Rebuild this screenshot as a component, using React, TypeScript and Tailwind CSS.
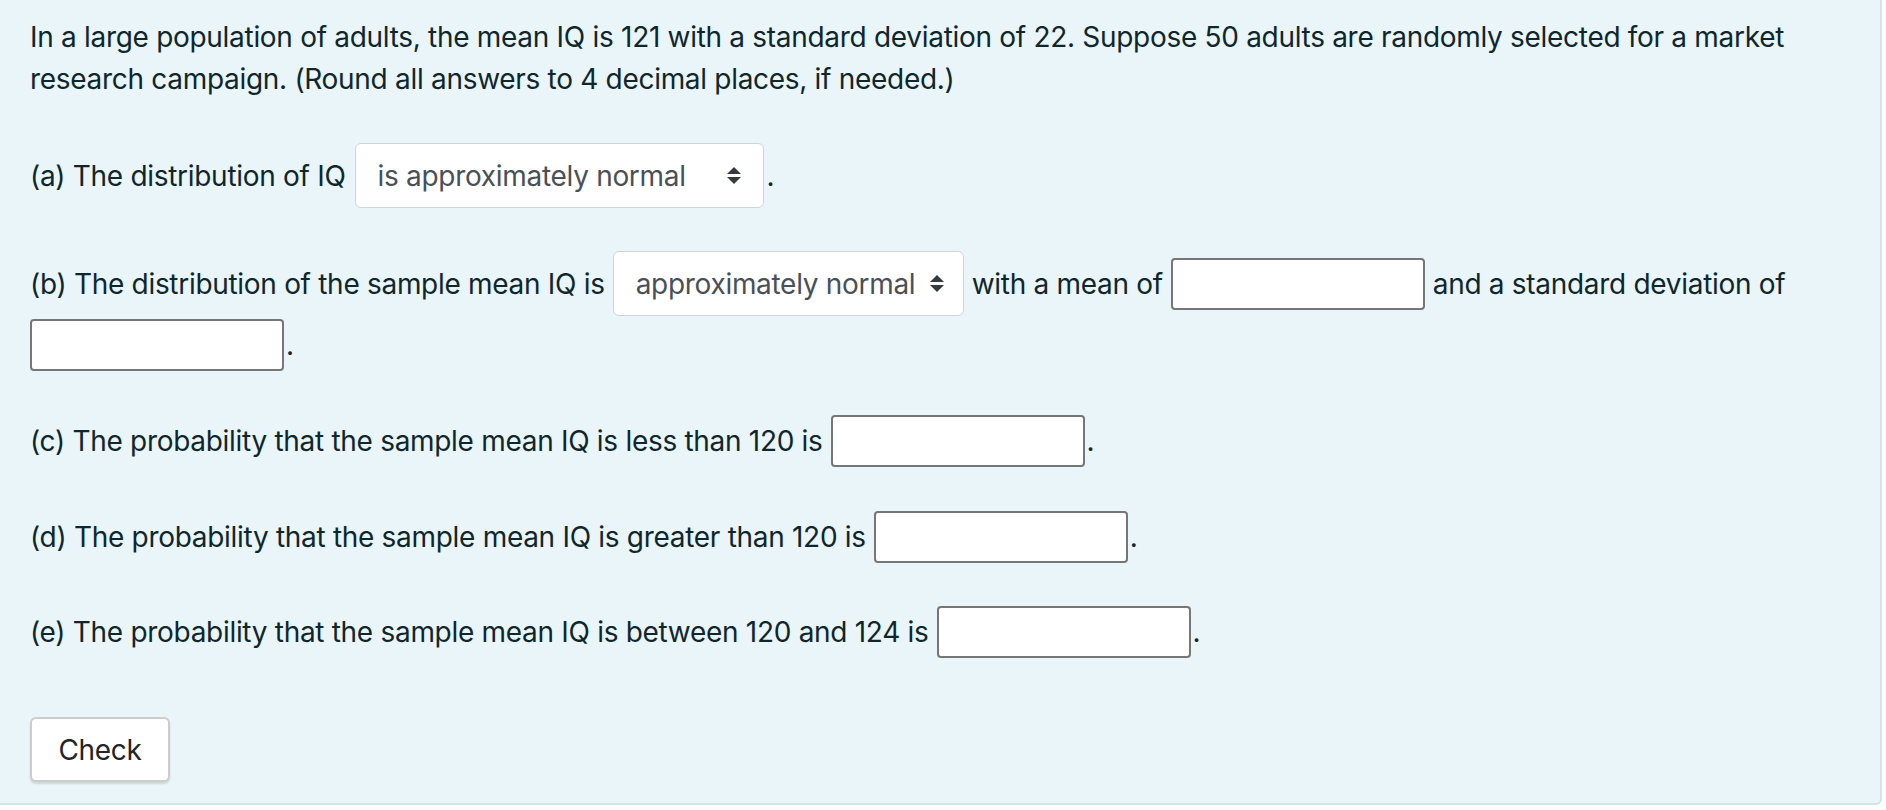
import { useState } from 'react';

function UpDown() {
  return (
    <svg width="16" height="19" viewBox="0 0 16 19" className="shrink-0">
      <path d="M8 1 L15 8 H1 Z" fill="#343a40" />
      <path d="M8 18 L15 11 H1 Z" fill="#343a40" />
    </svg>
  );
}

function Choice({ value, width, gap }: { value: string; width: string; gap: string }) {
  return (
    <div
      className={`${width} h-[65px] shrink-0 flex items-center bg-white border border-[#ced4da] rounded-[6px] pl-[22px] pr-[21px] text-[#495057] ${gap}`}
    >
      <span className="whitespace-nowrap">{value}</span>
      <UpDown />
    </div>
  );
}

function Blank() {
  return (
    <input
      type="text"
      className="w-[254px] h-[52px] shrink-0 bg-white border-2 border-[#767676] rounded-[4px] outline-none px-2"
    />
  );
}

export default function App() {
  const [checked, setChecked] = useState(false);

  return (
    <div className="bg-white min-h-[810px]">
      <div
        className="w-[1882px] bg-[#e9f5f8] border-r-2 border-b-2 border-[#cfe6ec] rounded-br-[6px] pl-[30px] pt-[16px] pb-[21px] text-[#10262d] text-[28px] tracking-[-0.3px]"
        style={{ fontFamily: 'Inter, "Noto Sans", sans-serif' }}
      >
        <p className="leading-[42px] pr-[60px]">
          In a large population of adults, the mean IQ is 121 with a standard deviation of 22. Suppose 50 adults are
          randomly selected for a market research campaign. (Round all answers to 4 decimal places, if needed.)
        </p>

        <div className="mt-[43px] h-[65px] flex items-center">
          <span>(a) The distribution of IQ</span>
          <div className="ml-[9px]">
            <Choice value="is approximately normal" width="w-[409px]" gap="justify-between" />
          </div>
          <span className="ml-[3px]">.</span>
        </div>

        <div className="mt-[43px] h-[65px] flex items-center">
          <span>(b) The distribution of the sample mean IQ is</span>
          <div className="ml-[8px]">
            <Choice value="approximately normal" width="w-[351px]" gap="gap-[14px]" />
          </div>
          <span className="ml-[8px]">with a mean of</span>
          <div className="ml-[8px]">
            <Blank />
          </div>
          <span className="ml-[8px]">and a standard deviation of</span>
        </div>
        <div className="mt-[3px] h-[52px] flex items-center">
          <Blank />
          <span className="ml-[2px]">.</span>
        </div>

        <div className="mt-[44px] h-[52px] flex items-center">
          <span>(c) The probability that the sample mean IQ is less than 120 is</span>
          <div className="ml-[8px]">
            <Blank />
          </div>
          <span className="ml-[2px]">.</span>
        </div>

        <div className="mt-[44px] h-[52px] flex items-center">
          <span>(d) The probability that the sample mean IQ is greater than 120 is</span>
          <div className="ml-[8px]">
            <Blank />
          </div>
          <span className="ml-[2px]">.</span>
        </div>

        <div className="mt-[43px] h-[52px] flex items-center">
          <span>(e) The probability that the sample mean IQ is between 120 and 124 is</span>
          <div className="ml-[8px]">
            <Blank />
          </div>
          <span className="ml-[2px]">.</span>
        </div>

        <button
          type="button"
          onClick={() => setChecked(!checked)}
          className="mt-[59px] w-[140px] h-[65px] bg-white border-2 border-[#cccccc] rounded-[6px] shadow-[0_2px_2px_rgba(0,0,0,0.12)] text-[#212529] text-[28px]"
        >
          Check
        </button>
      </div>
    </div>
  );
}
